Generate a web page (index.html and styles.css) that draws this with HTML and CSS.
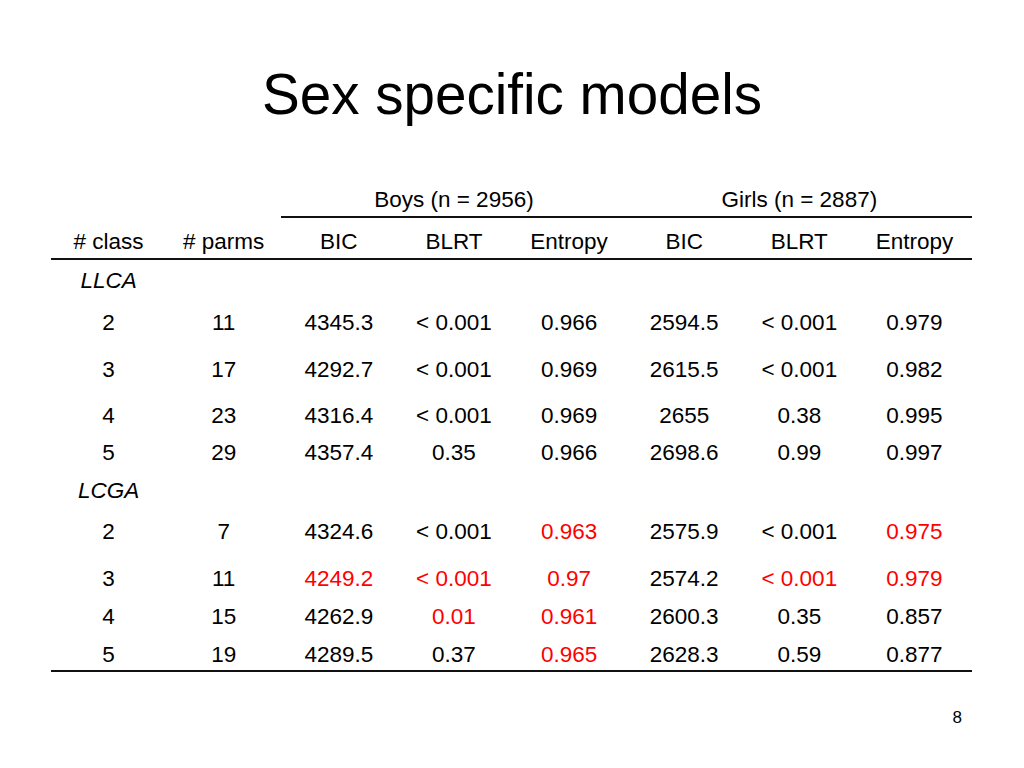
FILE: index.html
```html
<!DOCTYPE html>
<html>
<head>
<meta charset="utf-8">
<link rel="stylesheet" href="styles.css">
</head>
<body>
<div class="slide">
  <h1 class="title">Sex specific models</h1>
  <div class="table">
    <div class="group-row">
      <div class="groups">
        <div class="cell">Boys (n = 2956)</div>
        <div class="cell">Girls (n = 2887)</div>
      </div>
    </div>
    <div class="head-row">
      <div class="cell"># class</div>
      <div class="cell"># parms</div>
      <div class="cell">BIC</div>
      <div class="cell">BLRT</div>
      <div class="cell">Entropy</div>
      <div class="cell">BIC</div>
      <div class="cell">BLRT</div>
      <div class="cell">Entropy</div>
    </div>
    <div class="row h42"><div class="cell label">LLCA</div></div>
    <div class="row h47">
      <div class="cell">2</div><div class="cell">11</div><div class="cell">4345.3</div><div class="cell">&lt; 0.001</div><div class="cell">0.966</div><div class="cell">2594.5</div><div class="cell">&lt; 0.001</div><div class="cell">0.979</div>
    </div>
    <div class="row h46">
      <div class="cell">3</div><div class="cell">17</div><div class="cell">4292.7</div><div class="cell">&lt; 0.001</div><div class="cell">0.969</div><div class="cell">2615.5</div><div class="cell">&lt; 0.001</div><div class="cell">0.982</div>
    </div>
    <div class="row h37">
      <div class="cell">4</div><div class="cell">23</div><div class="cell">4316.4</div><div class="cell">&lt; 0.001</div><div class="cell">0.969</div><div class="cell">2655</div><div class="cell">0.38</div><div class="cell">0.995</div>
    </div>
    <div class="row h38">
      <div class="cell">5</div><div class="cell">29</div><div class="cell">4357.4</div><div class="cell">0.35</div><div class="cell">0.966</div><div class="cell">2698.6</div><div class="cell">0.99</div><div class="cell">0.997</div>
    </div>
    <div class="row h41"><div class="cell label">LCGA</div></div>
    <div class="row h47">
      <div class="cell">2</div><div class="cell">7</div><div class="cell">4324.6</div><div class="cell">&lt; 0.001</div><div class="cell red">0.963</div><div class="cell">2575.9</div><div class="cell">&lt; 0.001</div><div class="cell red">0.975</div>
    </div>
    <div class="row h38">
      <div class="cell">3</div><div class="cell">11</div><div class="cell red">4249.2</div><div class="cell red">&lt; 0.001</div><div class="cell red">0.97</div><div class="cell">2574.2</div><div class="cell red">&lt; 0.001</div><div class="cell red">0.979</div>
    </div>
    <div class="row h38">
      <div class="cell">4</div><div class="cell">15</div><div class="cell">4262.9</div><div class="cell red">0.01</div><div class="cell red">0.961</div><div class="cell">2600.3</div><div class="cell">0.35</div><div class="cell">0.857</div>
    </div>
    <div class="row h36">
      <div class="cell">5</div><div class="cell">19</div><div class="cell">4289.5</div><div class="cell">0.37</div><div class="cell red">0.965</div><div class="cell">2628.3</div><div class="cell">0.59</div><div class="cell">0.877</div>
    </div>
  </div>
  <div class="page-num">8</div>
</div>
</body>
</html>
```

FILE: styles.css
```css
html, body {
  margin: 0;
  padding: 0;
  background: #ffffff;
}

body {
  font-family: "Liberation Sans", Arial, sans-serif;
  color: #000000;
}

.slide {
  width: 1024px;
  height: 768px;
  overflow: hidden;
}

.title {
  margin: 0;
  padding-top: 67px;
  font-size: 56.6px;
  line-height: 56px;
  font-weight: normal;
  text-align: center;
}

.table {
  margin: 64px 0 0 51px;
  width: 921px;
  font-size: 22.5px;
  line-height: 25px;
  border-bottom: 2px solid #111111;
}

.cell {
  text-align: center;
  white-space: nowrap;
}

.group-row {
  display: grid;
  grid-template-columns: repeat(8, 1fr);
}

.groups {
  grid-column: 3 / 9;
  display: grid;
  grid-template-columns: 1fr 1fr;
  padding-bottom: 4px;
  border-bottom: 2px solid #111111;
}

.head-row {
  display: grid;
  grid-template-columns: repeat(8, 1fr);
  padding-top: 11px;
  padding-bottom: 4px;
  border-bottom: 2px solid #111111;
}

.row {
  display: grid;
  grid-template-columns: repeat(8, 1fr);
  box-sizing: border-box;
  padding-top: 8px;
}

.h36 { height: 36px; }
.h37 { height: 37px; }
.h38 { height: 38px; }
.h41 { height: 41px; }
.h42 { height: 42px; }
.h46 { height: 46px; }
.h47 { height: 47px; }

.label {
  font-style: italic;
}

.red {
  color: #ff0000;
}

.page-num {
  margin-top: 36px;
  padding-right: 62px;
  text-align: right;
  font-size: 17px;
  line-height: 20px;
}
```
